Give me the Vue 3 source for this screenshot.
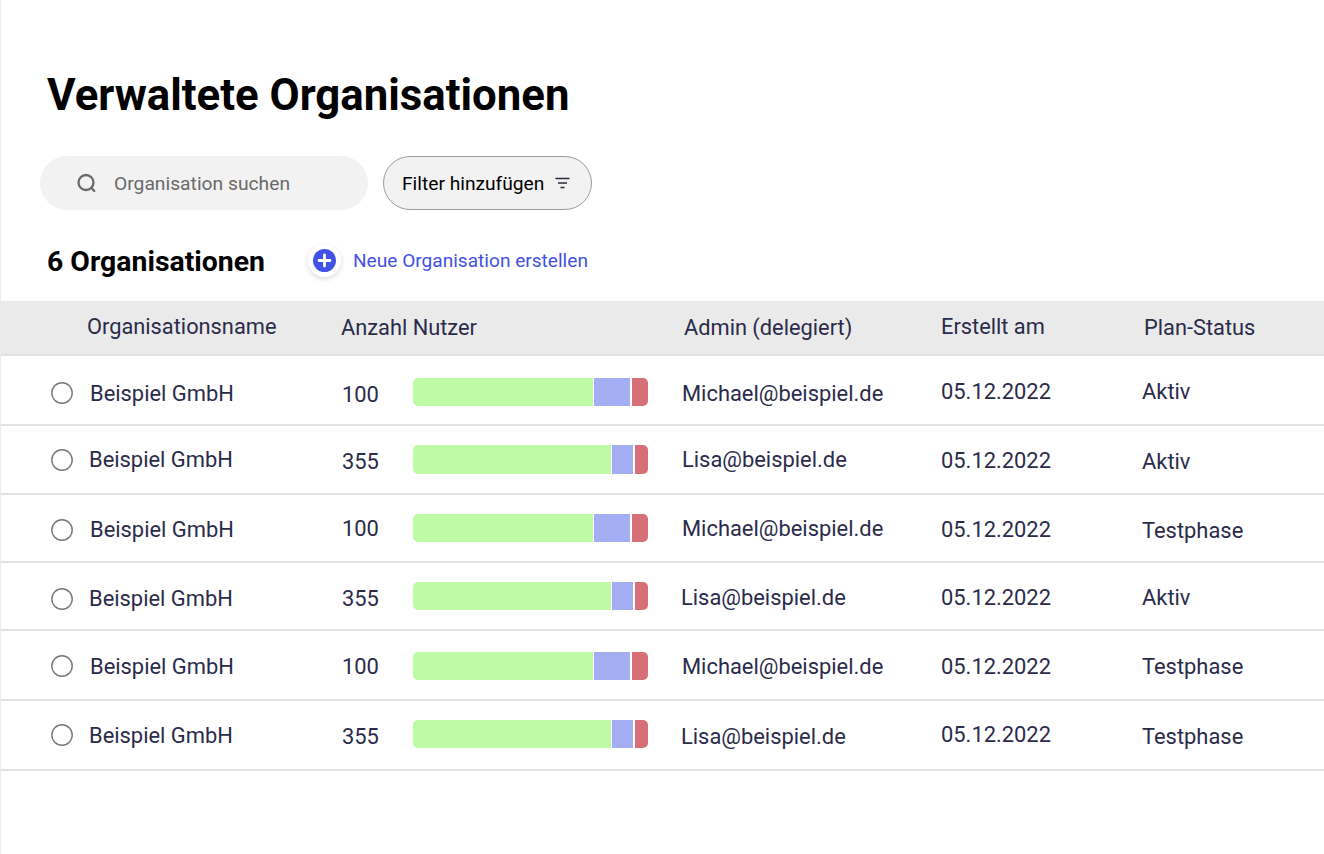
<template>
  <div class="page">
    <h1 class="title">Verwaltete Organisationen</h1>

    <div class="toolbar">
      <div class="search">
        <svg class="search-icon" width="20" height="20" viewBox="0 0 20 20" fill="none">
          <circle cx="9" cy="9.5" r="7.5" stroke="#696969" stroke-width="2.3" />
          <path d="M14.5 15 L17.3 18" stroke="#696969" stroke-width="2.3" stroke-linecap="round" />
        </svg>
        <span>Organisation suchen</span>
      </div>
      <button class="filter">
        <span>Filter hinzufügen</span>
        <svg width="15" height="12" viewBox="0 0 15 12" fill="none">
          <path d="M0.5 1.5H14.5M3 6H12M5.5 10.5H9.5" stroke="#2a2a3c" stroke-width="1.6" />
        </svg>
      </button>
    </div>

    <div class="summary">
      <h2 class="count">6 Organisationen</h2>
      <a class="create">
        <span class="plus-wrap">
          <svg width="23" height="23" viewBox="0 0 23 23">
            <circle cx="11.5" cy="11.5" r="11.5" fill="#4251e8" />
            <path d="M11.5 6V17M6 11.5H17" stroke="#fff" stroke-width="2.8" stroke-linecap="round" />
          </svg>
        </span>
        <span>Neue Organisation erstellen</span>
      </a>
    </div>

    <div class="table">
      <div class="head">
        <div class="head-name">Organisationsname</div>
        <div>Anzahl Nutzer</div>
        <div>Admin (delegiert)</div>
        <div class="head-date">Erstellt am</div>
        <div>Plan-Status</div>
      </div>
      <div v-for="(org, i) in orgs" :key="i" class="row" :style="{ height: org.height + 'px' }">
        <div class="name">
          <svg class="radio" :style="shift(org.dy[0])" width="22" height="22" viewBox="0 0 22 22" fill="none">
            <circle cx="11" cy="11" r="10.2" stroke="#777" stroke-width="1.4" />
          </svg>
          <span class="label" :style="shift(org.dy[1], org.dx[0])">Beispiel GmbH</span>
        </div>
        <div class="users">
          <span class="num" :style="shift(org.dy[2])">{{ org.users }}</span>
          <div class="bar" :style="shift(org.dy[3])">
            <span class="seg green" :style="{ width: org.bar[0] + 'px' }"></span>
            <span class="seg blue" :style="{ width: org.bar[1] + 'px' }"></span>
            <span class="seg red"></span>
          </div>
        </div>
        <div :style="shift(org.dy[4], org.dx[1])">{{ org.admin }}</div>
        <div :style="shift(org.dy[5])">05.12.2022</div>
        <div :style="shift(org.dy[6])">{{ org.status }}</div>
      </div>
    </div>
  </div>
</template>

<script setup>
const small = [179.5, 36]
const large = [197.7, 21]

// the rows in the mockup are not quite regular, dy/dx are per cell corrections
const orgs = [
  { users: 100, bar: small, admin: 'Michael@beispiel.de', status: 'Aktiv', height: 70, dy: [3, 3, 4, 2, 3, 1, 1], dx: [0, 0] },
  { users: 355, bar: large, admin: 'Lisa@beispiel.de', status: 'Aktiv', height: 69, dy: [0, 0, 2, 0, 0, 1, 2], dx: [-1, 0] },
  { users: 100, bar: small, admin: 'Michael@beispiel.de', status: 'Testphase', height: 68, dy: [2, 1, 0, 0, 0, 1, 2], dx: [0, 0] },
  { users: 355, bar: large, admin: 'Lisa@beispiel.de', status: 'Aktiv', height: 68, dy: [3, 2, 2, 0, 1, 1, 1], dx: [-1, -1] },
  { users: 100, bar: small, admin: 'Michael@beispiel.de', status: 'Testphase', height: 70, dy: [1, 1, 1, 1, 1, 1, 1], dx: [0, 0] },
  { users: 355, bar: large, admin: 'Lisa@beispiel.de', status: 'Testphase', height: 70, dy: [0, 0, 1, -1, 1, -1, 1], dx: [-1, -1] }
]

// cells are centered in the row, so a margin of 2n moves a cell by n
const shift = (dy, dx = 0) => ({ marginTop: dy * 2 + 'px', marginLeft: dx + 'px' })
</script>

<style>
html,
body {
  background: #fff;
}
</style>

<style scoped>
.page {
  box-sizing: border-box;
  width: 1324px;
  height: 854px;
  overflow: hidden;
  padding-top: 68px;
  background: #fff;
  border-left: 1px solid #ececec;
  font-family: Roboto, sans-serif;
  color: #2b2b4a;
}

.title {
  margin: 0 0 0 46px;
  height: 54px;
  font-size: 43.75px;
  line-height: 54px;
  font-weight: 700;
  color: #000;
}

.toolbar {
  display: flex;
  gap: 15px;
  margin: 34px 0 0 39px;
}

.search {
  display: flex;
  align-items: center;
  gap: 17px;
  box-sizing: border-box;
  width: 328px;
  height: 54px;
  padding-left: 37px;
  border-radius: 27px;
  background: #f2f2f2;
  font-size: 19.25px;
  color: #696969;
}

.filter {
  display: flex;
  align-items: center;
  gap: 11px;
  box-sizing: border-box;
  width: 209px;
  height: 54px;
  padding: 0 0 0 18px;
  border: 1px solid #9c9c9c;
  border-radius: 27px;
  background: #f2f2f2;
  font-family: inherit;
  font-size: 19.2px;
  color: #000;
}

.summary {
  display: flex;
  align-items: center;
  margin: 32px 0 0 46px;
  height: 36px;
}

.count {
  margin: 2px 0 0;
  width: 261px;
  font-size: 28.4px;
  font-weight: 700;
  color: #000;
}

.create {
  display: flex;
  align-items: center;
  gap: 12px;
  font-size: 19.1px;
  color: #4251e8;
}

.plus-wrap {
  display: flex;
  align-items: center;
  justify-content: center;
  width: 33px;
  height: 33px;
  border-radius: 50%;
  background: #fff;
  box-shadow: 0 2px 5px rgba(0, 0, 0, 0.14);
}

.table {
  margin-top: 23px;
}

.head {
  display: grid;
  grid-template-columns: 340px 343px 257px 203px 1fr;
  align-items: center;
  box-sizing: border-box;
  height: 55px;
  background: #eaeaea;
  border-bottom: 2px solid #e2e2e2;
  font-size: 21.8px;
}

.head-name {
  margin-top: -3px;
  padding-left: 86px;
}

.head-date {
  margin-top: -3px;
}

.row {
  display: grid;
  grid-template-columns: 340px 341px 259px 201px 1fr;
  align-items: center;
  box-sizing: border-box;
  border-bottom: 2px solid #e2e2e2;
  font-size: 21.9px;
}

.name {
  display: flex;
  align-items: center;
  gap: 17px;
  padding-left: 50px;
}

.radio {
  flex: none;
}

.users {
  display: flex;
  align-items: center;
}

.num {
  width: 71px;
  padding-left: 1px;
}

.bar {
  display: flex;
  gap: 1.7px;
  width: 235px;
  height: 28.6px;
  border-radius: 5px;
  overflow: hidden;
}

.seg {
  display: block;
}

.green {
  background: #bffaa6;
}

.blue {
  background: #a6aef3;
}

.red {
  flex: 1;
  background: #d66f76;
}
</style>
